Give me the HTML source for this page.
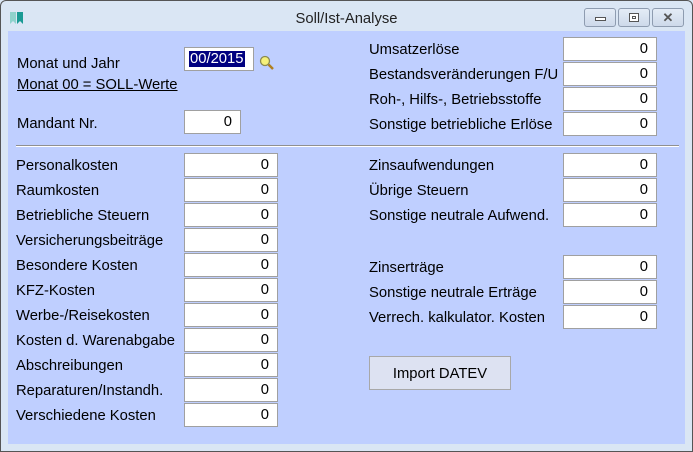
<!DOCTYPE html>
<html><head><meta charset="utf-8"><style>
*{margin:0;padding:0;box-sizing:border-box}
body{width:693px;height:452px;overflow:hidden;background:#dae6f4;font-family:"Liberation Sans",sans-serif;position:relative}
.frame{position:absolute;left:0;top:0;width:693px;height:452px;border:1px solid #555;border-radius:6px 6px 0 0;background:#dae6f4}
.client{position:absolute;left:8px;top:31px;width:677px;height:413px;background:#bfcfff}
.l{position:absolute;font-size:14.8px;color:#000;white-space:nowrap;line-height:16px;margin-top:1px}
.i{position:absolute;height:24px;background:#fff;border:1px solid #a0a0a0;font-size:14.8px;text-align:right;padding-right:8px;line-height:23px}
.title{position:absolute;top:11px;left:0;width:693px;text-align:center;font-size:14.8px;color:#222}
.btn{position:absolute;top:8px;height:19px;border:1px solid #8e9cb0;border-radius:3px;background:linear-gradient(#e4ecf6,#cdd9ea)}
</style></head><body>
<div class="frame"></div>
<svg style="position:absolute;left:10px;top:12px" width="16" height="12"><rect x="0" y="0" width="6" height="12" fill="#8fd2cc"/><rect x="7" y="0" width="6" height="12" fill="#1a9a94"/><path d="M0 12 L3 9 L6 12 M7 12 L10 9 L13 12" fill="#dae6f4"/></svg>
<div class="title">Soll/Ist-Analyse</div>
<div class="btn" style="left:584px;width:32px"><div style="position:absolute;left:10px;top:8px;width:11px;height:4px;border:1px solid #555;background:#fff"></div></div>
<div class="btn" style="left:618px;width:32px"><div style="position:absolute;left:10px;top:4px;width:10px;height:9px;border:1px solid #555;background:#fff"><div style="margin:2px;height:3px;border:1px solid #555"></div></div></div>
<div class="btn" style="left:652px;width:32px;text-align:center;font-size:13px;line-height:17px;color:#555;font-weight:bold">✕</div>
<div class="client"></div>
<div class="l" style="left:17px;top:55px">Monat und Jahr</div>
<div class="l" style="left:17px;top:76px;text-decoration:underline">Monat 00 = SOLL-Werte</div>
<div class="i" style="left:184px;top:47px;width:70px;text-align:left;padding:0 0 0 4px"><span style="background:#000080;color:#fff;padding:0 1px">00/2015</span></div>
<svg style="position:absolute;left:259px;top:55px" width="16" height="16"><circle cx="6" cy="6" r="4.5" fill="#f5f07a" stroke="#8a8a50" stroke-width="1.3"/><path d="M9.5 9.5 L14 14" stroke="#b08020" stroke-width="2.5"/></svg>
<div class="l" style="left:17px;top:115px">Mandant Nr.</div>
<div class="i" style="left:184px;top:110px;width:57px">0</div>
<div style="position:absolute;left:16px;top:145px;width:663px;height:1px;background:#909090"></div>
<div style="position:absolute;left:16px;top:146px;width:663px;height:1px;background:#fff"></div>

<div class="l" style="left:16px;top:157px">Personalkosten</div><div class="i" style="left:184px;top:153px;width:94px">0</div>
<div class="l" style="left:16px;top:182px">Raumkosten</div><div class="i" style="left:184px;top:178px;width:94px">0</div>
<div class="l" style="left:16px;top:207px">Betriebliche Steuern</div><div class="i" style="left:184px;top:203px;width:94px">0</div>
<div class="l" style="left:16px;top:232px">Versicherungsbeiträge</div><div class="i" style="left:184px;top:228px;width:94px">0</div>
<div class="l" style="left:16px;top:257px">Besondere Kosten</div><div class="i" style="left:184px;top:253px;width:94px">0</div>
<div class="l" style="left:16px;top:282px">KFZ-Kosten</div><div class="i" style="left:184px;top:278px;width:94px">0</div>
<div class="l" style="left:16px;top:307px">Werbe-/Reisekosten</div><div class="i" style="left:184px;top:303px;width:94px">0</div>
<div class="l" style="left:16px;top:332px">Kosten d. Warenabgabe</div><div class="i" style="left:184px;top:328px;width:94px">0</div>
<div class="l" style="left:16px;top:357px">Abschreibungen</div><div class="i" style="left:184px;top:353px;width:94px">0</div>
<div class="l" style="left:16px;top:382px">Reparaturen/Instandh.</div><div class="i" style="left:184px;top:378px;width:94px">0</div>
<div class="l" style="left:16px;top:407px">Verschiedene Kosten</div><div class="i" style="left:184px;top:403px;width:94px">0</div>

<div class="l" style="left:369px;top:41px">Umsatzerlöse</div><div class="i" style="left:563px;top:37px;width:94px">0</div>
<div class="l" style="left:369px;top:66px">Bestandsveränderungen F/U</div><div class="i" style="left:563px;top:62px;width:94px">0</div>
<div class="l" style="left:369px;top:91px">Roh-, Hilfs-, Betriebsstoffe</div><div class="i" style="left:563px;top:87px;width:94px">0</div>
<div class="l" style="left:369px;top:116px">Sonstige betriebliche Erlöse</div><div class="i" style="left:563px;top:112px;width:94px">0</div>

<div class="l" style="left:369px;top:157px">Zinsaufwendungen</div><div class="i" style="left:563px;top:153px;width:94px">0</div>
<div class="l" style="left:369px;top:182px">Übrige Steuern</div><div class="i" style="left:563px;top:178px;width:94px">0</div>
<div class="l" style="left:369px;top:207px">Sonstige neutrale Aufwend.</div><div class="i" style="left:563px;top:203px;width:94px">0</div>

<div class="l" style="left:369px;top:259px">Zinserträge</div><div class="i" style="left:563px;top:255px;width:94px">0</div>
<div class="l" style="left:369px;top:284px">Sonstige neutrale Erträge</div><div class="i" style="left:563px;top:280px;width:94px">0</div>
<div class="l" style="left:369px;top:309px">Verrech. kalkulator. Kosten</div><div class="i" style="left:563px;top:305px;width:94px">0</div>

<div style="position:absolute;left:369px;top:356px;width:142px;height:34px;border:1px solid #a8a8a8;background:#dde2f2;font-size:14.8px;text-align:center;line-height:34px">Import DATEV</div>
</body></html>
